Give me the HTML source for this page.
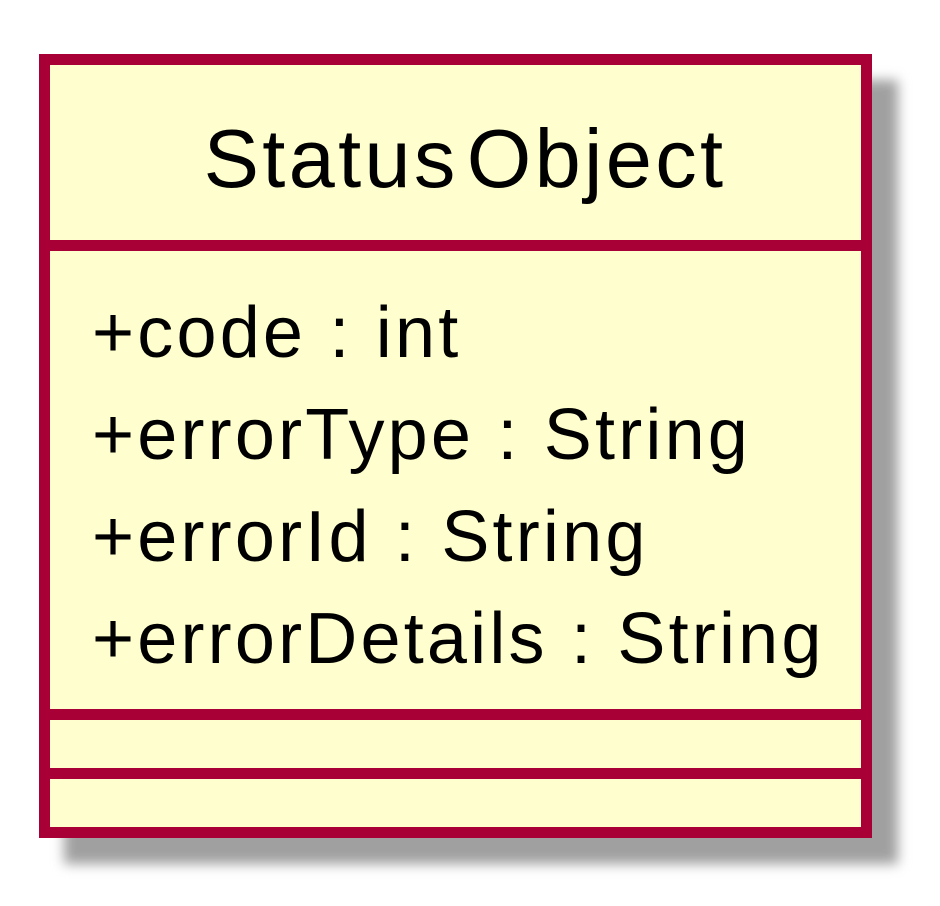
<!DOCTYPE html>
<html><head><style>
html,body{margin:0;padding:0;background:#fff;width:940px;height:906px;overflow:hidden}
.sh{position:absolute;left:64px;top:80px;width:834px;height:784px;background:#a0a0a0;filter:blur(6px)}
.box{position:absolute;left:39px;top:54px;width:811px;height:762px;border:11px solid #A80036;background:#FEFECE}
.sep{position:absolute;left:0;width:811px;height:11px;background:#A80036}
.t{position:absolute;font-family:"Liberation Sans",Arial,sans-serif;color:#000;white-space:nowrap}
</style></head><body>
<div class="sh"></div>
<div class="box">
<div class="sep" style="top:175px"></div>
<div class="sep" style="top:644px"></div>
<div class="sep" style="top:703px"></div>
<div class="t" style="left:150px;top:44px;font-size:83px;line-height:100px;width:530px;text-align:center;letter-spacing:3.3px">Status<span style="margin-left:8px">Object</span></div>
<div class="t" style="left:42px;top:217px;font-size:72px;line-height:102px;letter-spacing:3.2px">+code : int<br>+errorType : String<br>+errorId : String<br>+errorDetails : String</div>
</div>
</body></html>
